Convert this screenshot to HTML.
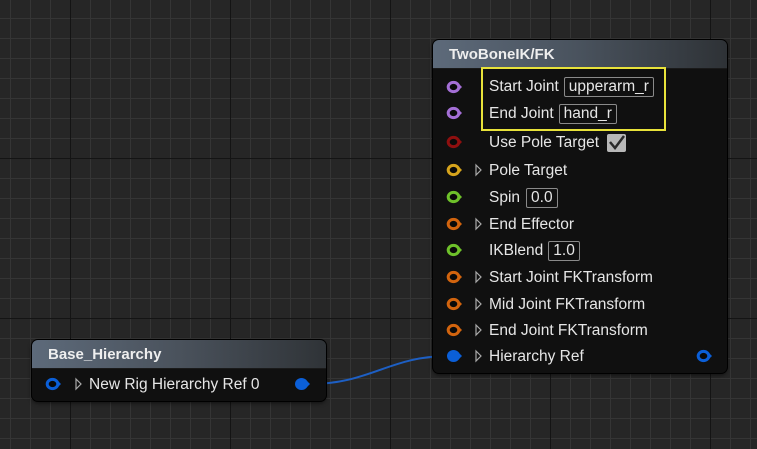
<!DOCTYPE html>
<html><head><style>
html,body{margin:0;padding:0}
body{width:757px;height:449px;overflow:hidden;position:relative;background-color:#262626;
background-image:
linear-gradient(to right,#141414 0,#141414 1px,transparent 1px),
linear-gradient(to bottom,#141414 0,#141414 1px,transparent 1px),
linear-gradient(to right,#353535 0,#353535 1px,transparent 1px),
linear-gradient(to bottom,#353535 0,#353535 1px,transparent 1px);
background-size:160px 160px,160px 160px,20px 20px,20px 20px;
background-position:70px 0,0 158px,10px 0,0 18px;
font-family:"Liberation Sans",sans-serif;color:#e6e6e6;font-size:15.5px}
.node{position:absolute;background:#101010;border-radius:6px;box-shadow:0 0 0 1px #000,0 2px 4px rgba(0,0,0,.6)}
.hdr{height:29px;border-radius:6px 6px 0 0;background:linear-gradient(to right,#5d6a7a 0,#49525d 50%,#2e3236 100%);border-bottom:1px solid #1a1a1a;font-weight:bold;font-size:15px;color:#eee;line-height:29px;padding-left:16px;box-sizing:border-box}
.row{position:absolute;left:0;height:20px;line-height:20px;white-space:nowrap;margin-top:1px}
.txt{position:absolute}
.box{display:inline-block;border:1px solid #8a8a8a;border-radius:2px;padding:0 4px;line-height:18px;margin-left:5px;height:18px;vertical-align:top}
</style></head><body>
<svg width="757" height="449" style="position:absolute;left:0;top:0">
<path d="M310 384 C 370 384, 390 356, 448 356" stroke="#1d5fc4" stroke-width="2" fill="none"/>
</svg>

<div class="node" style="left:433px;top:40px;width:294px;height:333px">
<div class="hdr">TwoBoneIK/FK</div>
</div>
<div style="position:absolute;left:481px;top:67px;width:181px;height:60px;border:2px solid #e8e23a;box-sizing:content-box"></div>

<svg width="757" height="449" style="position:absolute;left:0;top:0">
<defs>
<g id="ring"><ellipse cx="6.5" cy="0" rx="5.3" ry="4.6" fill="#0a0a0a" stroke="currentColor" stroke-width="3"/><path d="M12 -3 L15 0 L12 3Z" fill="currentColor"/></g>
<g id="dot"><ellipse cx="6.5" cy="0" rx="6.5" ry="6" fill="currentColor"/><path d="M12 -3 L15 0 L12 3Z" fill="currentColor"/></g>
<path id="tr" d="M0 -5 L5 0 L0 5Z" fill="none" stroke="#aaa" stroke-width="1.2"/>
</defs>
<use href="#ring" x="447" y="87" style="color:#a46fd6"/>
<use href="#ring" x="447" y="113" style="color:#a46fd6"/>
<use href="#ring" x="447" y="142" style="color:#8f0f0f"/>
<use href="#ring" x="447" y="170" style="color:#d6a41c"/>
<use href="#ring" x="447" y="197" style="color:#6ec12a"/>
<use href="#ring" x="447" y="224" style="color:#d2640e"/>
<use href="#ring" x="447" y="250" style="color:#6ec12a"/>
<use href="#ring" x="447" y="277" style="color:#d2640e"/>
<use href="#ring" x="447" y="304" style="color:#d2640e"/>
<use href="#ring" x="447" y="330" style="color:#d2640e"/>
<use href="#dot" x="447" y="356" style="color:#0b5fd8"/>
<use href="#ring" x="697" y="356" style="color:#0b5fd8"/>
<use href="#tr" x="476" y="170"/><use href="#tr" x="476" y="224"/><use href="#tr" x="476" y="277"/>
<use href="#tr" x="476" y="304"/><use href="#tr" x="476" y="330"/><use href="#tr" x="476" y="356"/>
<rect x="607" y="134" width="19" height="18" rx="2" fill="#b8b8b8"/>
<path d="M610 142 L615 148 L624 136" stroke="#2a2a2a" stroke-width="2.5" fill="none"/>
</svg>

<div class="row" style="top:76px"><span class="txt" style="left:489px">Start Joint<span class="box">upperarm_r</span></span></div>
<div class="row" style="top:103px"><span class="txt" style="left:489px">End Joint<span class="box">hand_r</span></span></div>
<div class="row" style="top:132px"><span class="txt" style="left:489px">Use Pole Target</span></div>
<div class="row" style="top:160px"><span class="txt" style="left:489px">Pole Target</span></div>
<div class="row" style="top:187px"><span class="txt" style="left:489px">Spin<span class="box" style="margin-left:6px">0.0</span></span></div>
<div class="row" style="top:214px"><span class="txt" style="left:489px">End Effector</span></div>
<div class="row" style="top:240px"><span class="txt" style="left:489px">IKBlend<span class="box">1.0</span></span></div>
<div class="row" style="top:267px"><span class="txt" style="left:489px">Start Joint FKTransform</span></div>
<div class="row" style="top:294px"><span class="txt" style="left:489px">Mid Joint FKTransform</span></div>
<div class="row" style="top:320px"><span class="txt" style="left:489px">End Joint FKTransform</span></div>
<div class="row" style="top:346px"><span class="txt" style="left:489px">Hierarchy Ref</span></div>

<div class="node" style="left:32px;top:340px;width:294px;height:61px">
<div class="hdr" style="background:linear-gradient(to right,#5d6a7a 0,#4a525c 50%,#2f3337 100%)">Base_Hierarchy</div>
</div>
<svg width="757" height="449" style="position:absolute;left:0;top:0">
<use href="#ring" x="46" y="384" style="color:#0b5fd8"/>
<use href="#tr" x="76" y="384"/>
<use href="#dot" x="295" y="384" style="color:#0b5fd8"/>
</svg>
<div class="row" style="top:374px"><span class="txt" style="left:89px">New Rig Hierarchy Ref 0</span></div>
</body></html>
